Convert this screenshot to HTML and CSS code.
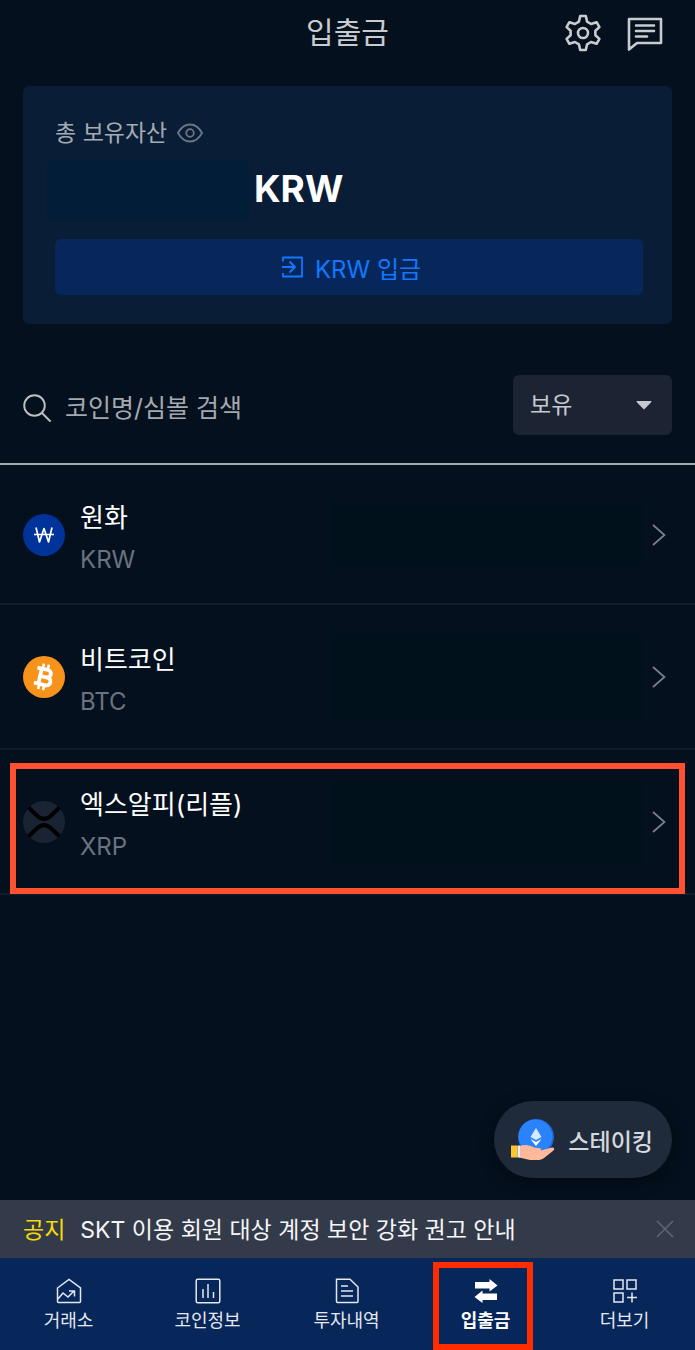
FILE: index.html
```html
<!DOCTYPE html>
<html lang="ko">
<head>
<meta charset="utf-8">
<meta name="viewport" content="width=device-width, initial-scale=1">
<title>입출금</title>
<link rel="stylesheet" href="styles.css">
</head>
<body>
<div class="app">
  <header class="header">
    <h1 class="header-title">입출금</h1>
    <div class="header-actions">
      <button class="icon-button" type="button" aria-label="설정">
        <svg width="38" height="38" viewBox="0 0 38 38" fill="none" stroke="currentColor" stroke-width="2.6" stroke-linejoin="round"><path d="M16.2 2h5.6l1.3 5.7 3.9 2.3 5.6-1.8 2.8 4.9-4 3.7v4.4l4 3.7-2.8 4.9-5.6-1.8-3.9 2.3-1.3 5.7h-5.6l-1.3-5.7L11 28l-5.600 1.800-2.800-4.900 4-3.700v-4.400l-4-3.700 2.800-4.900L11 10l3.900-2.300z"/><circle cx="19" cy="19" r="5"/></svg>
      </button>
      <button class="icon-button" type="button" aria-label="메시지">
        <svg width="38" height="38" viewBox="0 0 38 38" fill="none" stroke="currentColor" stroke-width="2.6" stroke-linejoin="round" stroke-linecap="round"><path d="M3 5h32v24H11l-8 6.500z"/><path d="M10 11.500h18M10 17h18M10 22.500h11"/></svg>
      </button>
    </div>
  </header>

  <main class="main">
    <section class="asset-card">
      <div class="asset-label">
        <h2 class="asset-heading">총 보유자산</h2>
        <button class="icon-button eye-button" type="button" aria-label="금액 숨기기">
          <svg width="26" height="20" viewBox="0 0 26 20" fill="none" stroke="currentColor" stroke-width="1.800"><path d="M1 10C4 4.500 8 1.500 13 1.500S22 4.500 25 10c-3 5.500-7 8.500-12 8.500S4 15.500 1 10z"/><circle cx="13" cy="10" r="3.800"/></svg>
        </button>
      </div>
      <p class="asset-amount"><span class="amount-mask"></span><span class="asset-unit">KRW</span></p>
      <button class="deposit-button" type="button">
        <svg width="22" height="22" viewBox="0 0 22 22" fill="none" stroke="currentColor" stroke-width="1.800" stroke-linejoin="round"><path d="M2 5.500V1.500h19v19H2V17M1 11h13M8.500 5.500L14 11l-5.500 5.500"/></svg>
        <span>KRW 입금</span>
      </button>
    </section>

    <form class="filter">
      <label class="search">
        <svg width="28" height="28" viewBox="0 0 28 28" fill="none" stroke="currentColor" stroke-width="1.900" stroke-linecap="round"><circle cx="11.500" cy="11.500" r="10.300"/><path d="M19 19l8 8"/></svg>
        <input class="search-input" type="text" placeholder="코인명/심볼 검색" aria-label="코인명/심볼 검색">
      </label>
      <div class="select-wrap">
        <select class="select" aria-label="보유 필터"><option>보유</option><option>전체</option></select>
        <svg class="select-arrow" width="16" height="10" viewBox="0 0 16 10" fill="currentColor"><path d="M1 1h14a.7.7 0 0 1 .4 1L8.600 9a1 1 0 0 1-1.200 0L.6 2A.7.7 0 0 1 1 1z"/></svg>
      </div>
    </form>

    <ul class="coins">
      <li class="coin-item">
        <a class="coin" href="#krw">
          <svg class="coin-icon" viewBox="0 0 42 42" fill="none"><circle cx="21" cy="21" r="21" fill="#003399"/><path d="M13 13.500L16.500 28 21 14.500 25.500 28 29 13.500M11 20.500h20" stroke="#fff" stroke-width="1.700" stroke-linejoin="round"/></svg>
          <span class="coin-text"><span class="coin-name">원화</span><span class="coin-symbol">KRW</span></span>
          <span class="balance-mask"></span>
          <svg class="chevron" viewBox="0 0 14 24"><path d="M1 2L12.500 12 1 22"/></svg>
        </a>
      </li>
      <li class="coin-item">
        <a class="coin" href="#btc">
          <svg class="coin-icon" viewBox="0 0 42 42" fill="none"><circle cx="21" cy="21" r="21" fill="#f7931a"/><g transform="rotate(13 21 21)" stroke="#fff"><path d="M12.500 13.300h10.800a3.700 3.700 0 0 1 0 7.500h-5.800H24.500a3.900 3.900 0 0 1 0 7.900H12.500M17 13.300v15.200" stroke-width="3.800"/><path d="M18 8v5M23 8v5M18 29v5M23 29v5" stroke-width="2.600"/></g></svg>
          <span class="coin-text"><span class="coin-name">비트코인</span><span class="coin-symbol">BTC</span></span>
          <span class="balance-mask tall"></span>
          <svg class="chevron" viewBox="0 0 14 24"><path d="M1 2L12.500 12 1 22"/></svg>
        </a>
      </li>
      <li class="coin-item highlighted">
        <a class="coin" href="#xrp">
          <svg class="coin-icon" viewBox="0 0 42 42" fill="none"><circle cx="21" cy="21" r="21" fill="#1a2333"/><path d="M5.500 6.500l8.500 8.200q7 6.300 14 0l8.500-8.200M5.500 35.500l8.500-8.200q7-6.300 14 0l8.500 8.200" stroke="#000" stroke-width="4"/></svg>
          <span class="coin-text"><span class="coin-name">엑스알피(리플)</span><span class="coin-symbol">XRP</span></span>
          <span class="balance-mask tall"></span>
          <svg class="chevron" viewBox="0 0 14 24"><path d="M1 2L12.500 12 1 22"/></svg>
        </a>
      </li>
    </ul>
  </main>

  <footer class="dock">
    <button class="staking" type="button">
      <svg width="44" height="44" viewBox="0 0 44 44"><circle cx="25" cy="19" r="18" fill="#1766dc"/><circle cx="24.500" cy="18.500" r="17" fill="#2b83fb"/><path d="M25 10l5.500 9L25 22l-5.500-3z" fill="#d7e8ff"/><path d="M19.500 21l5.500 3 5.500-3L25 28z" fill="#fff"/><path d="M8 28c6-2 11-1 15 1.500l5 .5c2 .5 2.500 1.500 2 2.500l11-3c2-.3 3 1.500 1.500 3L33 40c-2 1.500-4 2-6 2h-8L8 39.500z" fill="#ffb899"/><path d="M0 27.500h6.500v12H0z" fill="#ffc529"/><path d="M6.500 27.500H9v12H6.500z" fill="#e5edf5"/></svg>
      <span>스테이킹</span>
    </button>
    <div class="notice">
      <a class="notice-link" href="#notice"><strong class="notice-tag">공지</strong><span>SKT 이용 회원 대상 계정 보안 강화 권고 안내</span></a>
      <button class="icon-button notice-close" type="button" aria-label="공지 닫기">
        <svg width="18" height="18" viewBox="0 0 18 18" fill="none" stroke="currentColor" stroke-width="1.600"><path d="M1 1l16 16M17 1L1 17"/></svg>
      </button>
    </div>
    <nav class="tabs">
      <a class="tab" href="#exchange">
        <svg class="tab-icon" viewBox="0 0 26 26"><path d="M1.500 10L13 1.500 24.500 10v13.500a1 1 0 0 1-1 1h-21a1 1 0 0 1-1-1zM2 21l5-6 5 4 6-6M13 13h5.500v5.500"/></svg>
        <span>거래소</span>
      </a>
      <a class="tab" href="#info">
        <svg class="tab-icon" viewBox="0 0 26 26"><rect x="1.200" y="1.200" width="23.600" height="23.600" rx="1.500"/><path d="M8 11v9M13 6v14M18.500 14v6"/></svg>
        <span>코인정보</span>
      </a>
      <a class="tab" href="#history">
        <svg class="tab-icon" viewBox="0 0 26 26"><path d="M2.500 1.200H16L24 9v14.500a1 1 0 0 1-1 1H3.500a1 1 0 0 1-1-1zM7 8h7M7 13h12M7 18h12"/></svg>
        <span>투자내역</span>
      </a>
      <a class="tab active" href="#transfer" aria-current="page">
        <svg class="tab-icon solid" viewBox="0 0 26 26"><path d="M2 4h14.500V1l8 6.500-8 6v-3H2zM24 15.500H9.500v-3l-8 6.500 8 6v-3H24z"/></svg>
        <span>입출금</span>
      </a>
      <a class="tab" href="#more">
        <svg class="tab-icon" viewBox="0 0 26 26"><path d="M2 2h9v9H2zM15 2h9v9h-9zM2 15h9v9H2zM20 14.500v10M15 19.500h10"/></svg>
        <span>더보기</span>
      </a>
    </nav>
  </footer>
</div>
</body>
</html>
```
FILE: styles.css
```css
* {
  box-sizing: border-box;
}

body {
  margin: 0;
  background: #04101d;
  color: #fff;
  font-family: Inter, "Noto Sans CJK KR", sans-serif;
  font-size: 24px;
}

h1, h2, p, ul {
  margin: 0;
  padding: 0;
  font-weight: 400;
}

button, input, select {
  border: 0;
  padding: 0;
  background: none;
  color: inherit;
  font: inherit;
}

a {
  color: inherit;
  text-decoration: none;
}

svg {
  display: block;
  flex: none;
}

.app {
  display: flex;
  flex-direction: column;
  min-height: 100vh;
}

.header {
  display: grid;
  grid-template-columns: 1fr auto 1fr;
  align-items: center;
  height: 66px;
  padding: 0 31px;
  color: #c9cccf;
}

.header-title {
  grid-column: 2;
  padding-bottom: 2px;
  font-size: 30px;
  line-height: 62px;
}

.header-actions {
  display: flex;
  justify-content: flex-end;
  gap: 24px;
}

.icon-button {
  display: flex;
  cursor: pointer;
}

.main {
  flex: 1;
  padding-top: 20px;
}

.asset-card {
  margin: 0 23px;
  padding: 30px 29px 29px 32px;
  border-radius: 6px;
  background: #091e36;
}

.asset-label {
  display: flex;
  align-items: center;
  gap: 10px;
  line-height: 34px;
  color: #a5abb3;
}

.asset-heading {
  font-size: 23px;
}

.eye-button {
  color: #6b7685;
}

.asset-amount {
  display: flex;
  align-items: center;
  gap: 5px;
  margin: 11px 0 18px -8px;
  font-size: 37px;
  line-height: 56px;
  font-weight: 700;
}

.asset-unit {
  padding-bottom: 4px;
}

.amount-mask {
  width: 202px;
  height: 60px;
  background: #021d37;
}

.deposit-button {
  display: flex;
  align-items: center;
  justify-content: center;
  gap: 12px;
  width: 100%;
  height: 56px;
  padding-left: 4px;
  border-radius: 6px;
  background: #07265a;
  color: #1278ff;
}

.filter {
  display: flex;
  align-items: center;
  justify-content: space-between;
  gap: 16px;
  height: 141px;
  padding: 22px 23px 0;
  border-bottom: 2px solid #a3a8ae;
}

.search {
  display: flex;
  flex: 1;
  align-items: center;
  gap: 14px;
  padding-top: 6px;
  color: #bcc0c3;
}

.search-input {
  flex: 1;
  min-width: 0;
  height: 40px;
  outline: 0;
  font-size: 25px;
}

.search-input::placeholder {
  color: #a5a8af;
  opacity: 1;
}

.select-wrap {
  display: flex;
  align-items: center;
  position: relative;
  width: 159px;
  color: #c7c9ce;
}

.select {
  width: 100%;
  height: 60px;
  padding: 0 17px;
  border-radius: 6px;
  background: #1c2434;
  font-size: 23px;
  appearance: none;
}

.select-arrow {
  position: absolute;
  right: 20px;
  pointer-events: none;
}

.coins {
  list-style: none;
}

.coin-item {
  position: relative;
  border-bottom: 2px solid #111d2a;
}

.coin {
  display: grid;
  grid-template-columns: 42px 1fr 50% 14px;
  align-items: center;
  height: 143px;
  padding: 0 29px 0 23px;
}

.coin-item:first-child .coin {
  height: 138px;
  padding-top: 2px;
}

.highlighted::after {
  content: "";
  position: absolute;
  inset: 13px 10px -1px;
  border: 6px solid #ff5130;
  pointer-events: none;
}

.coin-icon {
  width: 42px;
  height: 42px;
}

.coin-text {
  display: flex;
  flex-direction: column;
  padding: 8px 0 0 15px;
  line-height: 42px;
  white-space: nowrap;
}

.coin-name {
  font-size: 26px;
}

.coin-symbol {
  color: #6b7280;
}

.balance-mask {
  height: 62px;
  margin-right: 9px;
  background: #01111c;
}

.balance-mask.tall {
  height: 86px;
}

.chevron {
  width: 14px;
  height: 24px;
  fill: none;
  stroke: #7b818b;
  stroke-width: 1.7px;
}

.dock {
  position: sticky;
  bottom: 0;
}

.staking {
  display: flex;
  align-items: center;
  gap: 13px;
  position: absolute;
  right: 23px;
  bottom: 172px;
  height: 77px;
  padding: 0 19px 0 17px;
  border-radius: 39px;
  background: #1f2b3a;
  box-shadow: 0 4px 16px rgb(0 0 0 / 40%);
  color: #d5d8dc;
  font-size: 23px;
  font-weight: 500;
}

.notice {
  display: flex;
  align-items: center;
  justify-content: space-between;
  height: 58px;
  padding: 0 21px 0 23px;
  background: #333b4b;
  color: #f5f6f7;
}

.notice-link {
  display: flex;
  gap: 15px;
  padding-bottom: 2px;
  font-size: 23px;
}

.notice-tag {
  color: #f6dc00;
  font-weight: 400;
}

.notice-close {
  color: #5e6572;
}

.tabs {
  display: grid;
  grid-template-columns: repeat(5, 1fr);
  height: 92px;
  background: #07265a;
}

.tab {
  display: flex;
  flex-direction: column;
  align-items: center;
  gap: 4px;
  position: relative;
  padding: 20px 2px 0 0;
  color: #e4e8ef;
  font-size: 18px;
  line-height: 26px;
}

.tab-icon {
  width: 26px;
  height: 26px;
  fill: none;
  stroke: currentColor;
  stroke-width: 1.5px;
}

.tab-icon.solid {
  fill: currentColor;
  stroke: none;
}

.active {
  color: #fff;
  font-weight: 700;
}

.active::after {
  content: "";
  position: absolute;
  inset: 4px 23px 0 16px;
  border: 6px solid #ff2c00;
  pointer-events: none;
}
```
